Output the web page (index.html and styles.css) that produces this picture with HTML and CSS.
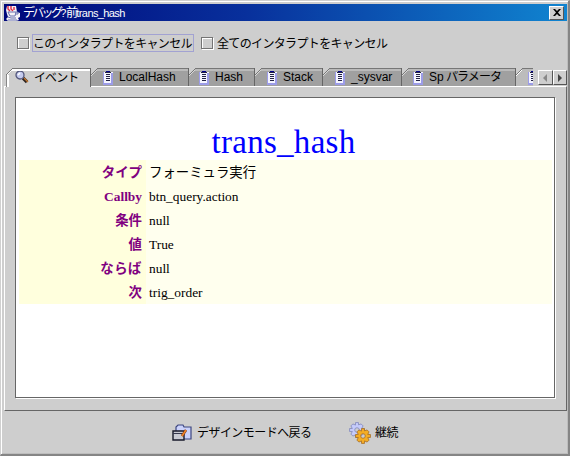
FILE: index.html
```html
<!DOCTYPE html>
<html lang="ja">
<head>
<meta charset="utf-8">
<title>trans_hash</title>
<link rel="stylesheet" href="styles.css">
</head>
<body>
<svg class="defs" width="0" height="0" aria-hidden="true">
  <symbol id="clip" viewBox="0 0 12 15"><g shape-rendering="crispEdges"><path fill="#f5f5ff" d="M1 2h10v12H1z"/><path fill="#9c9ce8" d="M1 13h10v2H1zM9 3h2v11H9zM1 2h1v12H1z"/><path fill="#00008c" d="M4 0h4v3H4z"/><path fill="#222244" d="M3 2h6v1H3zM4 4h4v1H4zM4 6h4v1H4zM4 8h4v1H4zM4 10h4v1H4z"/></g></symbol>
  <symbol id="gear" viewBox="-7 -7 14 14"><path fill-rule="evenodd" d="M-1.3-6.5h2.6v2L3.6-5.3 5.3-3.6 4.1-1.3h2.4v2.6H4.1L5.3 3.6 3.6 5.3 1.3 4.3v2.2h-2.6V4.3L-3.6 5.3-5.3 3.6-4.1 1.3h-2.4v-2.6h2.4L-5.3-3.6-3.6-5.3-1.3-4.3zM0-2A2 2 0 1 0 0 2 2 2 0 1 0 0-2z"/></symbol>
</svg>
<div class="window">
  <header class="titlebar">
    <svg class="java" width="16" height="16" viewBox="0 0 16 16"><path fill="#f4f1f6" d="M2 1h9l1 6 3 1v4l-2 1 1 2-3 1H3l-2-2 2-2-1-3-1-4z"/><path d="M3 1v3l2 2M6 1v3l2 2M9 2v3" fill="none" stroke="#e02c45" stroke-width="1.4"/><path d="M3 7h8l-1 4H5zM11 7h2v2h-2M3 12l3 1h5M3 15h9" fill="none" stroke="#6670ae"/></svg>
    <span class="caption">デバッグ<span class="latin">?</span>前<span class="latin">trans_hash</span></span>
    <button class="close" aria-label="閉じる"><svg width="8" height="7" viewBox="0 0 8 7"><path d="M0 0h2l2 2 2-2h2L5 3.5 8 7H6L4 5 2 7H0l3-3.5z"/></svg></button>
  </header>
  <div class="options">
    <i class="box"></i><span class="check focused">このインタラプトをキャンセル</span>
    <i class="box second"></i><span class="check">全てのインタラプトをキャンセル</span>
  </div>
  <nav class="tabs">
    <div class="tab active event"><svg class="mag" width="14" height="14" viewBox="0 0 14 14"><path d="M8 8l4 4" stroke="#2d2420" stroke-width="3.4"/><path d="M9 8l4 4" stroke="#c17732" stroke-width="1.5"/><circle cx="5" cy="5" r="4" fill="#c5cbee" stroke="#53577c" stroke-width="1.3"/><path d="M3 5l2-2" stroke="#fff" stroke-width="1.5"/></svg><span>イベント</span></div>
    <div class="tab local"><svg class="clip"><use href="#clip"/></svg><span>LocalHash</span></div>
    <div class="tab hash"><svg class="clip"><use href="#clip"/></svg><span>Hash</span></div>
    <div class="tab stack"><svg class="clip"><use href="#clip"/></svg><span>Stack</span></div>
    <div class="tab sysvar"><svg class="clip"><use href="#clip"/></svg><span>_sysvar</span></div>
    <div class="tab sp"><svg class="clip"><use href="#clip"/></svg><span>Sp <b>パラメータ</b></span></div>
    <div class="tab cut"><svg class="clip"><use href="#clip"/></svg></div>
    <div class="scroll"><button><svg width="4" height="8" viewBox="0 0 4 8"><path fill="#888" d="M4 0v8L0 4z"/></svg></button><button><svg width="4" height="8" viewBox="0 0 4 8"><path fill="#444" d="M0 0v8l4-4z"/></svg></button></div>
  </nav>
  <main class="panel">
    <section class="page">
      <h1>trans_hash</h1>
      <dl>
        <dt>タイプ</dt><dd>フォーミュラ実行</dd>
        <dt>Callby</dt><dd>btn_query.action</dd>
        <dt>条件</dt><dd>null</dd>
        <dt>値</dt><dd>True</dd>
        <dt class="then">ならば</dt><dd>null</dd>
        <dt>次</dt><dd>trig_order</dd>
      </dl>
    </section>
  </main>
  <footer class="actions">
    <svg width="20" height="18" viewBox="0 0 20 18"><path d="M4 7V3l2-2h5l1 2h7v12H8" fill="#cbd2fb" stroke="#3d4680" stroke-width="1.2"/><path d="M1 7h11v9H1z" fill="#c9cbd4" stroke="#181a2b" stroke-width="1.4"/><path d="M1 9.5h11" stroke="#35374d"/><path d="M14 6l-4 6" stroke="#7c3515" stroke-width="2.6"/><path d="M14 6l-4 6" stroke="#ed8428" stroke-width="1.6"/></svg>
    <span class="design">デザインモードへ戻る</span>
    <svg class="gears" width="22" height="22" viewBox="0 0 22 22"><use href="#gear" x="0" y="0" width="16" height="16" fill="#c5cbfa" stroke="#8088bb" stroke-width=".7"/><use href="#gear" x="6" y="6" width="16" height="16" fill="#f4ad25" stroke="#a66d25" stroke-width=".7"/></svg>
    <span class="continue">継続</span>
  </footer>
</div>
</body>
</html>
```

FILE: styles.css
```css
* { box-sizing: border-box; }
body { margin: 0; overflow: hidden; background: #cecece; color: #000; font: 12px/16px "Liberation Sans", "Noto Sans CJK JP", sans-serif; }
.defs { position: absolute; }
.window { width: 570px; height: 456px; padding: 3px 1px 2px 3px; border: 1px solid #d0d0d0; border-right: 2px solid #858585; border-bottom: 2px solid #858585; box-shadow: inset 1px 1px #fff, inset -1px -1px #bdbdbd; background: #cecece; }
button { padding: 0; border: 1px solid; border-color: #fff #555 #555 #fff; background: #cecece; display: flex; align-items: center; justify-content: center; }
.titlebar { height: 17px; display: flex; align-items: center; background: linear-gradient(90deg, #00087b, #08309c 43%, #1084d0); color: #fff; padding: 0 2px 0 1px; }
.java { margin-right: 2px; }
.caption { white-space: nowrap; letter-spacing: -2.7px; }
.latin { letter-spacing: -.3px; font-size: 11px; }
.latin:last-child { margin-left: 1px; letter-spacing: -.6px; }
.close { width: 15px; height: 14px; margin-left: auto; margin-right: 1px; }
.options { height: 47px; padding: 12px 0 0 13px; display: flex; align-items: flex-start; }
.box { width: 12px; height: 12px; margin-top: 4px; border: 1px solid #747474; box-shadow: inset 1px 1px #fff, 1px 1px #fff; flex: none; }
.second { margin-left: 7px; }
.check { height: 18px; margin: 1px 0 0 3px; padding: 1px 0 0; line-height: 16px; white-space: nowrap; letter-spacing: -.65px; border: 1px solid transparent; width: 184px; }
.check.focused { width: 162px; border-color: #a2a2d2; }
.tabs { display: flex; align-items: flex-end; height: 18px; padding-left: 2px; position: relative; }
.tab { position: relative; height: 18px; display: flex; align-items: center; flex: none; background: linear-gradient(135deg, #cecece 4.5px, #777 4.5px 5.3px, #d8d8d8 5.3px 6.2px, #a0a0a0 6.2px); border-right: 1px solid #666; white-space: nowrap; padding-left: 11px; overflow: hidden; }
.tab::before { content: ""; position: absolute; left: 6px; right: 0; top: 0; height: 2px; border-top: 1px solid #777; background: #bbb; }
.tab.active { background: linear-gradient(135deg, #cecece 4.5px, #777 4.5px 5.3px, #fff 5.3px 6.2px, #cecece 6.2px); height: 19px; margin-bottom: -1px; z-index: 1; padding-left: 9px; }
.tab.active::before { background: #fff; }
.tab.active::after { content: ""; position: absolute; left: 0; top: 7px; bottom: 0; width: 2px; border-left: 1px solid #888; background: #fff; }
.clip { width: 12px; height: 15px; margin-right: 5px; flex: none; }
.mag { margin: -1px 5px 0 0; }
.event { width: 85px; letter-spacing: -.9px; }
.local { width: 98px; }
.hash { width: 66px; padding-left: 9px; }
.stack { width: 68px; }
.sysvar { width: 79px; }
.sp { width: 114px; padding-left: 10px; }
.sp b { font-weight: 400; letter-spacing: -.9px; margin-left: -1px; }
.cut { width: 17px; border-right: 0; background: linear-gradient(135deg, #cecece 4.5px, #777 4.5px 5.3px, #fff 5.3px 6.2px, #bcbcbc 6.2px); }
.scroll { display: flex; margin-left: 5px; height: 16px; }
.scroll button { width: 14.5px; height: 15px; }
.panel { height: 325px; padding: 10px 11px 0 10px; border: 1px solid; border-color: #fff #666 #666 #fff; }
.page { width: 540px; height: 301px; padding: 26px 2px 0 3px; border: 1px solid #666; box-shadow: 1px 1px #fff; background: #fff; }
h1 { margin: 0; height: 36px; padding-right: 4px; text-align: center; color: #00f; font: 33px/36px "Liberation Serif", serif; letter-spacing: .3px; }
dl { display: grid; grid-template-columns: 127px 1fr; grid-auto-rows: 24px; margin: 0; font: 13.4px/24px "Liberation Serif", "Noto Sans CJK JP", serif; }
dt { padding: 1px 4px 0 0; line-height: 23px; text-align: right; font-weight: 700; color: #800080; background: #ffffdd; }
.then { letter-spacing: .5px; }
dd { margin: 0; padding: 1px 0 0 3px; line-height: 23px; background: #ffffee; }
.actions { height: 43px; display: flex; align-items: center; padding-left: 168px; }
.design { margin-left: 5px; width: 115px; white-space: nowrap; letter-spacing: -.55px; }
.gears { margin-left: 37px; }
.continue { margin-left: 4px; letter-spacing: -.4px; }
```
